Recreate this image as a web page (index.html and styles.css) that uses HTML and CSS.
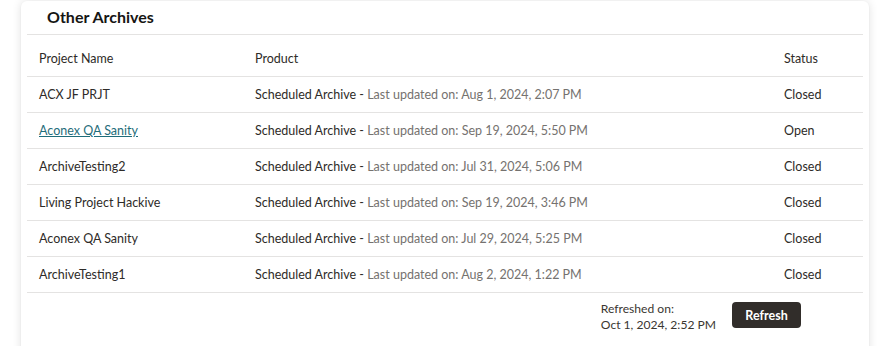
FILE: index.html
```html
<!DOCTYPE html>
<html>
<head>
<meta charset="utf-8">
<link rel="stylesheet" href="styles.css">
</head>
<body>
<div class="card">
  <h2 class="title">Other Archives</h2>
  <table class="grid">
    <thead>
      <tr><th class="c-name">Project Name</th><th class="c-prod">Product</th><th class="c-status">Status</th></tr>
    </thead>
    <tbody>
      <tr><td>ACX JF PRJT</td><td>Scheduled Archive - <span class="muted">Last updated on: Aug 1, 2024, 2:07 PM</span></td><td>Closed</td></tr>
      <tr><td><a class="link" href="#">Aconex QA Sanity</a></td><td>Scheduled Archive - <span class="muted">Last updated on: Sep 19, 2024, 5:50 PM</span></td><td>Open</td></tr>
      <tr><td>ArchiveTesting2</td><td>Scheduled Archive - <span class="muted">Last updated on: Jul 31, 2024, 5:06 PM</span></td><td>Closed</td></tr>
      <tr><td>Living Project Hackive</td><td>Scheduled Archive - <span class="muted">Last updated on: Sep 19, 2024, 3:46 PM</span></td><td>Closed</td></tr>
      <tr><td>Aconex QA Sanity</td><td>Scheduled Archive - <span class="muted">Last updated on: Jul 29, 2024, 5:25 PM</span></td><td>Closed</td></tr>
      <tr><td>ArchiveTesting1</td><td>Scheduled Archive - <span class="muted">Last updated on: Aug 2, 2024, 1:22 PM</span></td><td>Closed</td></tr>
    </tbody>
  </table>
  <div class="footer">
    <div class="refreshed">Refreshed on:<br>Oct 1, 2024, 2:52 PM</div>
    <button class="btn">Refresh</button>
  </div>
</div>
</body>
</html>
```
FILE: styles.css
```css
html, body { margin: 0; padding: 0; background: #ffffff; }
body {
  font-family: Lato, "Noto Sans", sans-serif;
  font-size: 12.5px;
  color: #2e2b28;
  padding: 1px 24px 0 21px;
  height: 345px;
  overflow: hidden;
}
.card {
  width: 848px;
  box-sizing: border-box;
  background: #fff;
  border-radius: 6px;
  box-shadow: 0 0 10px rgba(0,0,0,0.12), 0 1px 2px rgba(0,0,0,0.06);
  padding: 0 6px 20px;
  height: 380px;
}
.title {
  margin: 0;
  padding: 0 20px 2px;
  height: 31px;
  line-height: 31px;
  font-size: 16px;
  font-weight: 700;
  color: #161513;
  border-bottom: 1px solid #e4e3e2;
}
.grid {
  width: 100%;
  border-collapse: collapse;
}
.grid th, .grid td {
  text-align: left;
  font-weight: 400;
  padding: 0 0 0 12px;
  border-bottom: 1px solid #e4e3e2;
  white-space: nowrap;
}
.grid th { height: 36px; padding-top: 5px; }
.grid td { height: 35px; }
.c-name { width: 204px; }
.c-prod { width: 517px; }
.muted { color: #75726f; }
.link { color: #1f6d7a; text-decoration: underline; }
.footer {
  display: flex;
  justify-content: flex-end;
  align-items: flex-start;
  gap: 16px;
  padding: 8px 62px 0 0;
}
.refreshed { line-height: 16px; color: #3a3631; font-size: 12.1px; }
.btn {
  font-family: Lato, "Noto Sans", sans-serif;
  font-size: 12.5px;
  font-weight: 700;
  color: #fff;
  background: #312d2a;
  border: none;
  border-radius: 4px;
  width: 69px;
  height: 26px;
  padding: 0;
  margin-top: 1px;
}
```
